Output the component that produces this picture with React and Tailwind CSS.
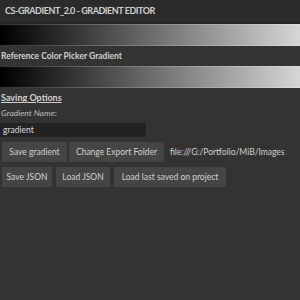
export default function App() {
  const font = { fontFamily: 'Lato, "Noto Sans", sans-serif' };
  const btn = "h-[20px] bg-[#454545] text-[#d0d0d0] text-[8.5px] flex items-center justify-center rounded-[1px] whitespace-nowrap";
  return (
    <div className="w-[300px] h-[300px] bg-[#333333] text-[#d2d2d2] overflow-hidden flex flex-col whitespace-nowrap" style={font}>
      <div className="h-[24px] bg-[#2b2b2b] flex items-center px-[5px] text-[9px] font-bold tracking-[-0.45px] text-[#cfcfcf] border-b-2 border-[#262626]">
        CS-GRADIENT_2.0 - GRADIENT EDITOR
      </div>
      <div className="h-[22px] border-y border-[#ffffff33] bg-[linear-gradient(to_right,#000000,#d6d6d6)]" />
      <div className="h-[20px] flex items-center px-[1px] text-[8.5px] font-bold">Reference Color Picker Gradient</div>
      <div className="h-[22px] border-y border-[#ffffff33] bg-[linear-gradient(to_right,#000000,#d6d6d6)]" />
      <div className="h-[16px] flex items-end px-[1px] text-[9px] font-bold underline leading-[12px]">Saving Options</div>
      <div className="h-[18px] flex items-center px-[1px] text-[8.5px] italic text-[#bdbdbd]">Gradient Name:</div>
      <div className="h-[14px] mt-[1px] w-[146px] bg-[#222222] text-[8.5px] flex items-center px-[3px] text-[#dcdcdc]">gradient</div>
      <div className="flex items-center gap-[2px] mt-[5px] px-[2px]">
        <div className={btn + " w-[65px]"}>Save gradient</div>
        <div className={btn + " w-[95px]"}>Change Export Folder</div>
        <div className="text-[8.5px] ml-[4px] text-[#cfcfcf]">file:///G:/Portfolio/MiB/Images</div>
      </div>
      <div className="flex items-center gap-[4px] mt-[5px] px-[2px]">
        <div className={btn + " w-[50px]"}>Save JSON</div>
        <div className={btn + " w-[54px]"}>Load JSON</div>
        <div className={btn + " w-[112px]"}>Load last saved on project</div>
      </div>
    </div>
  );
}
